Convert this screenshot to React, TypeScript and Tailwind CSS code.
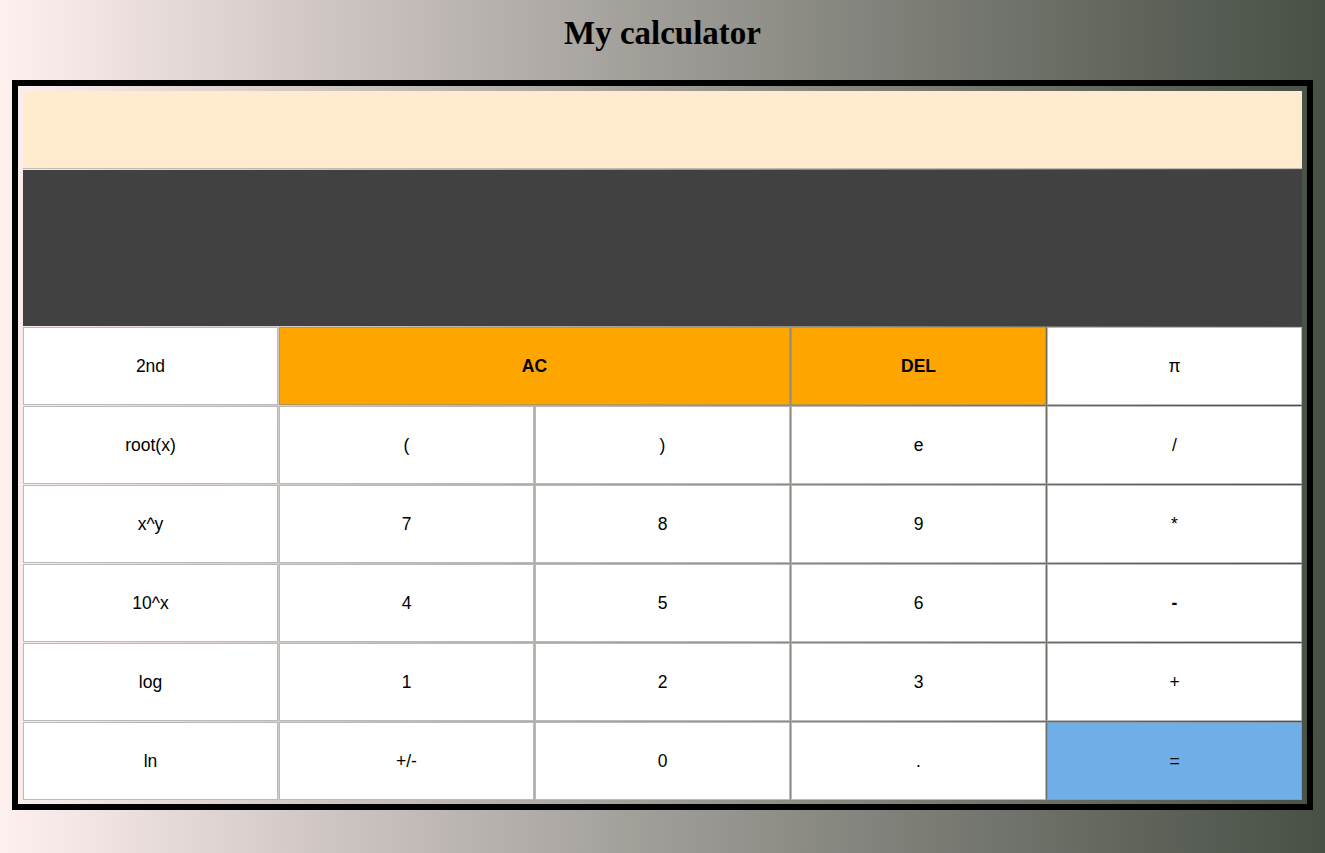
const rows: { label: string; span?: number; tone?: 'orange' | 'blue'; bold?: boolean }[][] = [
  [{ label: '2nd' }, { label: 'AC', span: 2, tone: 'orange', bold: true }, { label: 'DEL', tone: 'orange', bold: true }, { label: 'π' }],
  [{ label: 'root(x)' }, { label: '(' }, { label: ')' }, { label: 'e' }, { label: '/' }],
  [{ label: 'x^y' }, { label: '7' }, { label: '8' }, { label: '9' }, { label: '*' }],
  [{ label: '10^x' }, { label: '4' }, { label: '5' }, { label: '6' }, { label: '-', bold: true }],
  [{ label: 'log' }, { label: '1' }, { label: '2' }, { label: '3' }, { label: '+' }],
  [{ label: 'ln' }, { label: '+/-' }, { label: '0' }, { label: '.' }, { label: '=', tone: 'blue' }],
]

function toneClass(tone?: 'orange' | 'blue') {
  if (tone === 'orange') return 'bg-[#ffa500]'
  if (tone === 'blue') return 'bg-[#70aee8]'
  return 'bg-white'
}

export default function App() {
  return (
    <div className="min-h-[853px] w-full bg-gradient-to-r from-[#fff0f0] to-[#485046] font-['Liberation_Sans',Arial,sans-serif]">
      {/* Title */}
      <h1 className="pt-[15px] text-center font-['Liberation_Serif','Times_New_Roman',serif] text-[33px] font-bold leading-[37px] text-black">
        My calculator
      </h1>

      {/* Calculator frame */}
      <div className="mx-[12px] mt-[28px] border-[6px] border-black p-[5px] pb-[4px]">
        {/* Displays */}
        <div className="h-[78px] border-b border-[#9a9a9a]/60 bg-[#ffebcd]" />
        <div className="mt-px h-[156px] bg-[#414141]" />

        {/* Keys */}
        <div className="mt-px grid grid-cols-5 gap-px">
          {rows.flatMap((row, r) =>
            row.map((key, c) => (
              <button
                key={`${r}-${c}`}
                className={`flex h-[78px] items-center justify-center border border-[#8c8c8c]/60 text-[17.5px] text-black ${toneClass(key.tone)} ${key.span === 2 ? 'col-span-2' : ''} ${key.bold ? 'font-bold' : ''}`}
              >
                {key.label}
              </button>
            ))
          )}
        </div>
      </div>
    </div>
  )
}
